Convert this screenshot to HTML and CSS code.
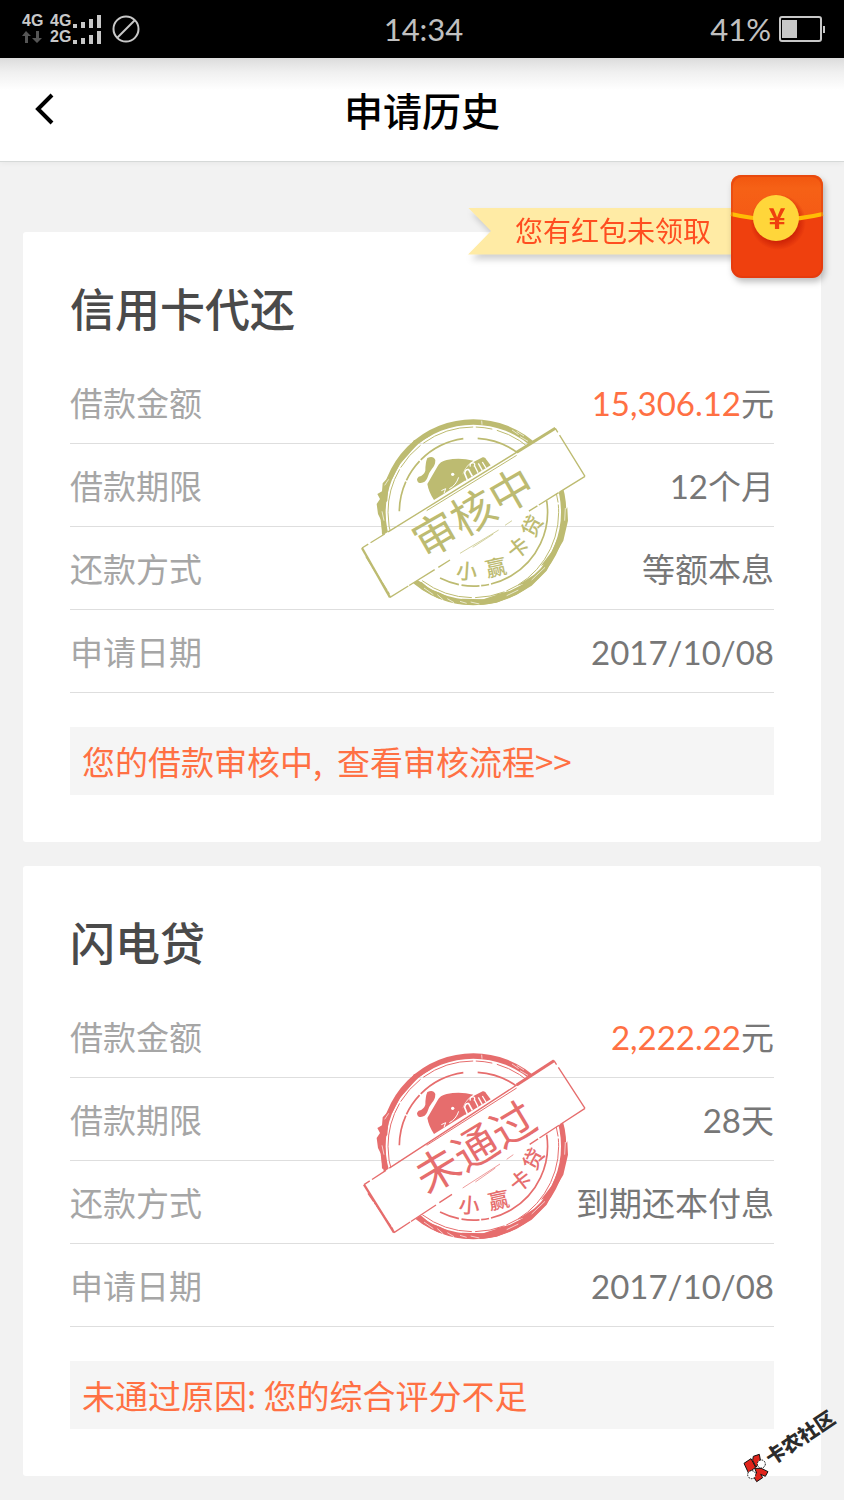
FILE: index.html
```html
<!DOCTYPE html>
<html lang="zh-CN">
<head>
    <meta charset="UTF-8">
    <meta name="viewport" content="width=device-width, initial-scale=1.0">
    <title>申请历史</title>
    <link rel="stylesheet" href="styles.css">
</head>
<body>
    <!-- 印章公共图形 -->
    <svg class="defs" aria-hidden="true">
        <defs>
            <g id="stamp-ring">
                <circle cx="370" cy="325" r="271" fill="none" stroke="currentColor" stroke-width="16"/>
                <path d="M178 132 L192 108 L206 112 L240 80 L262 74 L240 96 L205 118 L180 146 L150 180 L128 222 L116 240 L112 290 L104 300 L106 350 L112 390 L96 392 L94 350 L84 330 L80 300 L90 285 L82 270 L96 262 L98 238 L118 216 L140 172 L162 146 Z" fill="currentColor"/>
                <path d="M652 310 L654 350 L640 410 L612 458 L590 500 L545 545 L500 572 L440 596 L400 602 L360 603 L330 600 L335 584 L400 586 L440 572 L428 574 L480 560 L520 540 L500 546 L552 512 L590 478 L572 486 L606 442 L628 390 L638 330 Z" fill="currentColor"/>
                <path d="M196 532 L215 556 L262 582 L316 598 L330 588 L300 582 L270 566 L240 556 L215 534 Z" fill="currentColor"/>
                <circle cx="370" cy="325" r="256" fill="none" stroke="currentColor" stroke-width="3" stroke-dasharray="300 6 90 10 160 8 50 14"/>
                <path d="M148 322 A222 222 0 0 1 340 104" fill="none" stroke="currentColor" stroke-width="5" stroke-dasharray="92 4 70 5 200"/>
                <path d="M383 103 A222 222 0 0 1 505 148" fill="none" stroke="currentColor" stroke-width="5"/>
                <path d="M590 290 A222 222 0 0 1 235 500" fill="none" stroke="currentColor" stroke-width="5" stroke-dasharray="330 6 24 5 54 8 60"/>
                <g fill="none" stroke="#fff" stroke-width="2">
                    <path d="M395 50 L396 62"/>
                    <path d="M486 78 L506 92 M500 82 L522 96 M510 98 L534 112"/>
                    <path d="M104 244 L116 226 M96 322 L102 350"/>
                    <path d="M222 552 L250 572 M262 572 L280 588 M292 584 L312 596"/>
                    <path d="M330 592 L350 598 M362 594 L388 600"/>
                    <path d="M545 528 L585 490 M470 575 L505 558 M646 312 L644 350"/>
                </g>
            </g>
            <g id="stamp-face">
                <path d="M232 162 Q250 154 256 168 Q256 184 246 194 Q236 206 232 222 Q224 240 206 236 Q196 226 206 218 Q222 214 226 200 Q226 176 232 162 Z" fill="currentColor"/>
                <path d="M232 240 L262 188 Q270 172 290 168 Q330 160 370 170 Q346 184 338 210 L348 228 L252 288 Q236 264 232 240 Z" fill="currentColor"/>
                <path d="M366 176 L398 160 Q406 158 410 168 L422 184 L346 230 L338 212 Q346 188 366 176 Z" fill="currentColor"/>
                <circle cx="308" cy="211" r="5" fill="#fff"/>
                <path d="M326 220 Q318 244 298 254 M274 260 L287 254 L282 268" fill="none" stroke="#fff" stroke-width="3"/>
                <path d="M352 228 L344 208 Q346 194 356 197 L367 217" fill="none" stroke="#fff" stroke-width="5"/>
                <path d="M361 188 Q358 178 368 176 Q378 178 372 188 M384 206 L374 186 M397 200 L385 178 M408 192 L397 174" fill="none" stroke="#fff" stroke-width="4"/>
            </g>
        </defs>
    </svg>

    <div class="status-bar">
        <div class="status-left">
            <div class="signal">
                <span>4G</span>
                <span>4G</span>
                <svg width="28" height="13" viewBox="0 0 28 13" fill="#c8c8c8"><path d="M0 9h4v4H0zM8 7h4v6H8zM16 4h4v9h-4zM24 0h4v13h-4z"/></svg>
                <svg width="20" height="12" viewBox="0 0 20 12" fill="#555"><path d="M4 0l5 5H6v7H3V5H0zM14 0h3v7h3l-5 5-5-5h4z"/></svg>
                <span>2G</span>
                <svg width="28" height="13" viewBox="0 0 28 13" fill="#c8c8c8"><path d="M0 9h4v4H0zM8 7h4v6H8zM16 4h4v9h-4zM24 0h4v13h-4z"/></svg>
            </div>
            <svg width="28" height="28" viewBox="0 0 28 28" fill="none" stroke="#c8c8c8" stroke-width="2"><circle cx="14" cy="14" r="12.5"/><path d="M5 23L23 5"/></svg>
        </div>
        <span class="clock">14:34</span>
        <div class="status-right">
            <span>41%</span>
            <svg width="46" height="26" viewBox="0 0 46 26"><rect x="1" y="1" width="41" height="24" rx="2" fill="none" stroke="#c8c8c8" stroke-width="2"/><rect x="3" y="4" width="15" height="18" fill="#c8c8c8"/><rect x="44" y="10" width="2" height="7" fill="#c8c8c8"/></svg>
        </div>
    </div>

    <header class="nav-bar">
        <button class="back-btn" type="button" aria-label="返回">
            <svg width="20" height="32" viewBox="0 0 20 32" fill="none" stroke="#000" stroke-width="4"><path d="M18 2L4 16l14 14"/></svg>
        </button>
        <h1>申请历史</h1>
    </header>

    <main class="content">
        <a class="red-packet" href="#">
            <span class="ribbon-wrap"><span class="ribbon">您有红包未领取</span></span>
            <svg class="packet" width="92" height="103" viewBox="0 0 92 103">
                <defs>
                    <linearGradient id="flap" x1="0" y1="0" x2="0" y2="1"><stop offset="0" stop-color="#f2560f"/><stop offset="0.3" stop-color="#f66116"/><stop offset="1" stop-color="#f55a15"/></linearGradient>
                    <radialGradient id="coin-shadow"><stop offset="0.7" stop-color="#c81e05"/><stop offset="1" stop-color="#c81e05" stop-opacity="0"/></radialGradient>
                </defs>
                <rect x="0" y="0" width="92" height="103" rx="11" fill="#ef400e"/>
                <path d="M0 39V11Q0 0 11 0H81Q92 0 92 11V39Q46 50 0 39Z" fill="url(#flap)"/>
                <circle cx="47" cy="47" r="28" fill="url(#coin-shadow)" opacity="0.8"/>
                <path d="M0 39Q46 50 92 39" fill="none" stroke="#ffbd05" stroke-width="4"/>
                <rect x="1" y="1" width="90" height="101" rx="10" fill="none" stroke="#d9350c" stroke-width="2" opacity="0.4"/>
                <circle cx="45" cy="43" r="23" fill="#ffd63a"/>
                <text class="yen" x="46" y="54" text-anchor="middle">¥</text>
            </svg>
        </a>

        <section class="card">
            <h2>信用卡代还</h2>
            <dl class="detail">
                <div class="row"><dt>借款金额</dt><dd><em>15,306.12</em>元</dd></div>
                <div class="row"><dt>借款期限</dt><dd>12个月</dd></div>
                <div class="row"><dt>还款方式</dt><dd>等额本息</dd></div>
                <div class="row"><dt>申请日期</dt><dd>2017/10/08</dd></div>
            </dl>
            <a class="note" href="#">您的借款审核中,&nbsp; 查看审核流程&gt;&gt;</a>

            <svg class="stamp stamp-pending" width="250" height="215" viewBox="0 0 750 645">
                <mask id="cut-pending" maskUnits="userSpaceOnUse" x="0" y="0" width="750" height="645">
                    <rect width="750" height="645" fill="#fff"/>
                    <path d="M36 432L616 73L705 217L120 580Z" fill="#000"/>
                </mask>
                <g mask="url(#cut-pending)"><use href="#stamp-ring"/><use href="#stamp-face"/></g>
                <g fill="none" stroke="currentColor" stroke-width="4">
                    <path d="M616 73L36 432" stroke-dasharray="590 12 50 8 40"/>
                    <path d="M616 73L500 145" stroke-width="9"/>
                    <path d="M500 154L230 320" stroke-width="3"/>
                    <path d="M616 73L705 217" stroke-dasharray="14 10 160"/>
                    <path d="M705 217L534 323M300 468L265 490M254 497L120 580" stroke-dasharray="90 3 70 5 30 6"/>
                    <path d="M36 432L120 580" stroke-width="7"/>
                    <path d="M48 458L118 570" stroke-dasharray="30 4 8 3"/>
                    <path d="M330 448L446 378M368 430L430 390M465 364L486 350" stroke-width="2"/>
                </g>
                <g class="stamp-text">
                    <text class="stamp-main" transform="translate(370 326) rotate(-30)" y="48">审核中</text>
                    <text transform="translate(350 503) rotate(4)" y="22">小</text>
                    <text transform="translate(438 492) rotate(-12)" y="22">赢</text>
                    <text transform="translate(505 433) rotate(-38)" y="22">卡</text>
                    <text transform="translate(547 367) rotate(-62)" y="22">贷</text>
                </g>
            </svg>
        </section>

        <section class="card">
            <h2>闪电贷</h2>
            <dl class="detail">
                <div class="row"><dt>借款金额</dt><dd><em>2,222.22</em>元</dd></div>
                <div class="row"><dt>借款期限</dt><dd>28天</dd></div>
                <div class="row"><dt>还款方式</dt><dd>到期还本付息</dd></div>
                <div class="row"><dt>申请日期</dt><dd>2017/10/08</dd></div>
            </dl>
            <p class="note">未通过原因: 您的综合评分不足</p>

            <svg class="stamp stamp-rejected" width="250" height="215" viewBox="0 0 750 645">
                <mask id="cut-rejected" maskUnits="userSpaceOnUse" x="0" y="0" width="750" height="645">
                    <rect width="750" height="645" fill="#fff"/>
                    <path d="M42 440L612 68L705 211L132 584Z" fill="#000"/>
                </mask>
                <g mask="url(#cut-rejected)"><use href="#stamp-ring"/><use href="#stamp-face"/></g>
                <g fill="none" stroke="currentColor" stroke-width="4">
                    <path d="M612 68L42 440" stroke-dasharray="590 12 50 8 40"/>
                    <path d="M612 68L500 141" stroke-width="9"/>
                    <path d="M500 150L230 322" stroke-width="3"/>
                    <path d="M612 68L705 211" stroke-dasharray="14 10 160"/>
                    <path d="M705 211L536 321M306 469L268 494M258 501L132 584" stroke-dasharray="90 3 70 5 30 6"/>
                    <path d="M42 440L132 584" stroke-width="7"/>
                    <path d="M54 466L130 576" stroke-dasharray="30 4 8 3"/>
                    <path d="M338 450L450 378M376 432L436 390M470 364L490 350" stroke-width="2"/>
                </g>
                <g class="stamp-text">
                    <text class="stamp-main" transform="translate(376 328) rotate(-31)" y="48">未通过</text>
                    <text transform="translate(358 503) rotate(4)" y="22">小</text>
                    <text transform="translate(446 488) rotate(-12)" y="22">赢</text>
                    <text transform="translate(512 430) rotate(-38)" y="22">卡</text>
                    <text transform="translate(551 364) rotate(-62)" y="22">贷</text>
                </g>
            </svg>
        </section>
    </main>

    <svg class="watermark" width="104" height="88" viewBox="0 -24 312 264">
        <g stroke="#111" stroke-width="3">
            <path d="M12 175L33 161L47 187L25 203Z" fill="#e0241b"/>
            <path d="M40 154L58 148L62 170L48 186L38 166Z" fill="#e0241b"/>
            <path d="M44 190L64 190L84 200L76 214L62 208L68 218L50 230L40 214L50 204Z" fill="#e0241b"/>
            <circle cx="64" cy="177" r="12" fill="#fff" stroke-dasharray="5 3"/>
            <circle cx="35" cy="209" r="12" fill="#fff" stroke-dasharray="5 3"/>
        </g>
        <text transform="translate(180 98) rotate(-34)" y="22" text-anchor="middle">卡农社区</text>
    </svg>
</body>
</html>
```

FILE: styles.css
```css
* {
    box-sizing: border-box;
    margin: 0;
    padding: 0;
}
body {
    position: relative;
    font-family: Lato, "Noto Sans CJK SC", sans-serif;
    background: #f2f2f2;
    color: #777;
}
a {
    text-decoration: none;
}
.defs {
    position: absolute;
    width: 0;
    height: 0;
}

/* 状态栏 */
.status-bar {
    display: grid;
    grid-template-columns: 1fr auto 1fr;
    align-items: center;
    height: 58px;
    padding: 0 19px 0 22px;
    background: #000;
    color: #c0c0c0;
}
.status-left {
    display: flex;
    align-items: center;
    gap: 11px;
}
.signal {
    display: grid;
    grid-template-columns: 22px auto auto;
    align-items: center;
    column-gap: 2px;
    color: #c8c8c8;
    font: bold 16px/16px "Liberation Sans", sans-serif;
}
.signal span:not(:first-child) {
    margin-left: 4px;
}
.clock {
    font-size: 31px;
}
.status-right {
    display: flex;
    align-items: center;
    justify-content: flex-end;
    gap: 8px;
    font-size: 31px;
}

/* 导航栏 */
.nav-bar {
    display: grid;
    grid-template-columns: 60px 1fr 60px;
    align-items: center;
    height: 104px;
    padding-bottom: 2px;
    background: linear-gradient(#dcdcdc, #f0f0f0 14px, #fff 32px);
    border-bottom: 1px solid #d6d9d8;
    box-shadow: 0 1px 6px rgba(0, 0, 0, 0.05);
}
.nav-bar h1 {
    color: #000;
    font-size: 39px;
    font-weight: 500;
    text-align: center;
}
.back-btn {
    display: flex;
    justify-content: flex-end;
    padding: 0 6px 0 0;
    border: none;
    background: none;
    cursor: pointer;
}

.content {
    position: relative;
    display: flex;
    flex-direction: column;
    gap: 24px;
    padding: 70px 23px 24px;
}

/* 红包提示 */
.red-packet {
    position: absolute;
    top: 13px;
    right: 21px;
    z-index: 2;
    display: flex;
    align-items: center;
}
.ribbon-wrap {
    margin: 9px -4px 0 0;
    filter: drop-shadow(3px 5px 3px rgba(0, 0, 0, 0.18));
}
.ribbon {
    display: block;
    padding: 0 24px 0 47px;
    background: #ffeba5;
    clip-path: polygon(0 0, 100% 0, 100% 100%, 0 100%, 23px 50%);
    color: #ff4e20;
    font-size: 28px;
    line-height: 47px;
}
.packet {
    position: relative;
    overflow: visible;
    filter: drop-shadow(2px 4px 3px rgba(0, 0, 0, 0.25));
}
.yen {
    fill: #ef400e;
    font: bold 29px "Noto Sans CJK SC", sans-serif;
}

/* 借款卡片 */
.card {
    position: relative;
    padding: 47px;
    background: #fff;
    border-radius: 3px;
}
.card h2 {
    margin-bottom: 18px;
    color: #4a4a4a;
    font-size: 45px;
    font-weight: 500;
    line-height: 62px;
    padding-bottom: 2px;
}
.row {
    display: flex;
    justify-content: space-between;
    height: 83px;
    border-bottom: 1px solid #dedede;
    font-size: 33px;
    line-height: 84px;
}
.row dt {
    color: #a6a6a6;
}
.row em {
    color: #ff7043;
    font-style: normal;
}
.note {
    display: block;
    margin-top: 34px;
    padding: 0 12px;
    background: #f5f5f5;
    color: #ff7043;
    font-family: "Noto Sans CJK SC", sans-serif;
    font-size: 33px;
    line-height: 68px;
}

/* 审核印章 */
.stamp {
    position: absolute;
    top: 172px;
    left: 41%;
    pointer-events: none;
}
.stamp-pending {
    color: #bdbb71;
}
.stamp-rejected {
    color: #e66d6d;
}
.stamp-text {
    fill: currentColor;
    font-size: 63px;
    font-weight: 500;
    text-anchor: middle;
}
.stamp-main {
    font-size: 132px;
    font-weight: 400;
}

.watermark {
    position: absolute;
    right: 0;
    bottom: 15px;
    z-index: 3;
}
.watermark text {
    fill: #2b2b2b;
    font: 900 59px "Noto Sans CJK SC", sans-serif;
}
```
